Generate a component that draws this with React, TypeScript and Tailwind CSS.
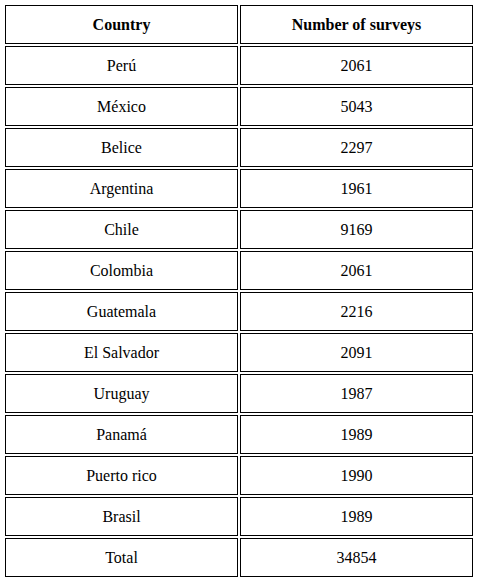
import React from 'react';

const ROWS: [string, string][] = [
    ['Perú', '2061'],
    ['México', '5043'],
    ['Belice', '2297'],
    ['Argentina', '1961'],
    ['Chile', '9169'],
    ['Colombia', '2061'],
    ['Guatemala', '2216'],
    ['El Salvador', '2091'],
    ['Uruguay', '1987'],
    ['Panamá', '1989'],
    ['Puerto rico', '1990'],
    ['Brasil', '1989'],
    ['Total', '34854'],
];

export default function App() {
    return (
        <div className="bg-white p-[3px] font-['Liberation_Serif',serif] text-[16px] leading-[18px] text-black">
            <table className="w-full table-fixed border-separate border-spacing-[2px]">
                <thead>
                    <tr>
                        <th className="h-[39px] border border-black p-0 pt-[1px] text-center align-middle font-bold">Country</th>
                        <th className="h-[39px] border border-black p-0 pt-[1px] text-center align-middle font-bold">Number of surveys</th>
                    </tr>
                </thead>
                <tbody>
                    {ROWS.map(([country, count]) => (
                        <tr key={country}>
                            <td className="h-[39px] border border-black p-0 pt-[1px] text-center align-middle">{country}</td>
                            <td className="h-[39px] border border-black p-0 pt-[1px] text-center align-middle">{count}</td>
                        </tr>
                    ))}
                </tbody>
            </table>
        </div>
    );
}
